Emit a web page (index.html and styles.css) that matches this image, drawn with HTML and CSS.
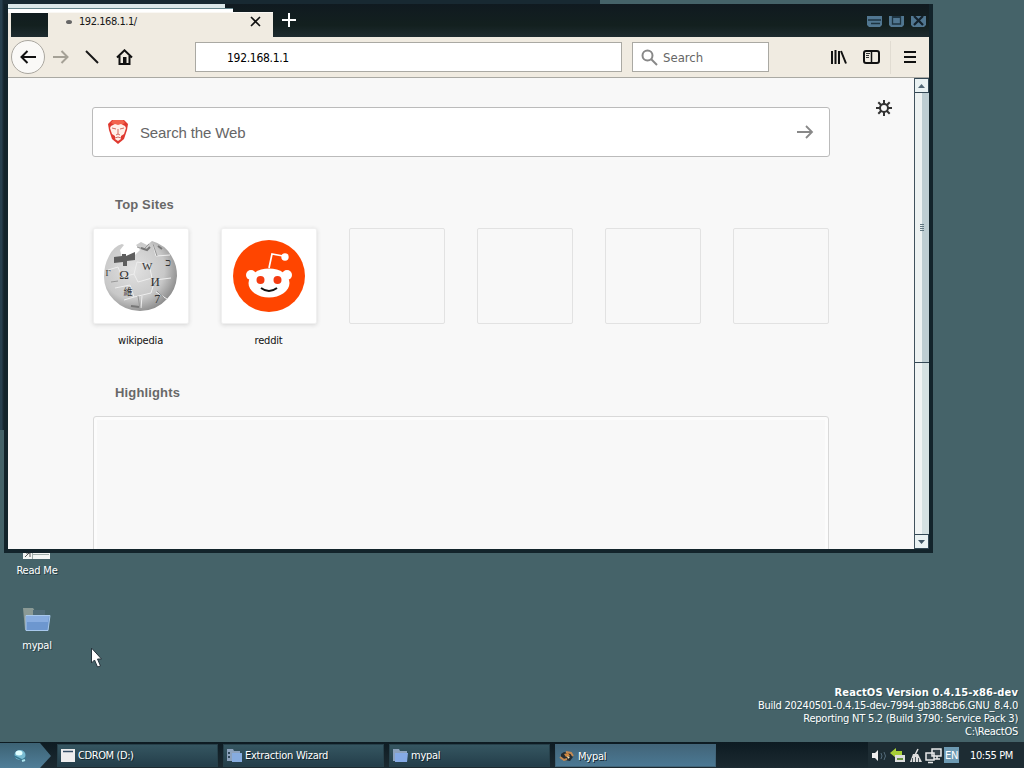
FILE: index.html
```html
<!DOCTYPE html>
<html lang="en">
<head>
<meta charset="utf-8">
<title>ReactOS desktop</title>
<link rel="stylesheet" href="styles.css">
</head>
<body>
<div class="desktop">
  <div class="back-window"></div>

  <div class="shortcut readme">
    <svg width="28" height="10" viewBox="0 0 28 10"><path fill="#f2f6f4" d="M0 0h27v8H0z"/><path fill="#9eaca9" d="M9 0h1v8H9zM10 3h16v1H10z"/><path stroke="#555" fill="none" d="M2 6l4-4M3 2h4v4"/></svg>
    <span>Read Me</span>
  </div>
  <div class="shortcut folder">
    <svg width="28" height="26" viewBox="0 0 28 26"><path fill="#8b9a95" d="M0 1h10l2 3h10v19H2z"/><path fill="#506c78" d="M10 3h12v5H10z"/><path fill="#6d97cf" stroke="#a8c8ec" d="M3 8.500h24L25 23.500H3z"/><path fill="#88ade0" d="M4 9h22l-1 6H4z"/></svg>
    <span>mypal</span>
  </div>

  <div class="window">
    <header class="titlebar">
      <div class="strip strip-top"></div>
      <div class="strip strip-bottom"></div>
      <div class="tab">
        <i class="dot"></i><span>192.168.1.1/</span>
        <svg class="tab-close" width="11" height="11" viewBox="0 0 11 11"><path d="M1 1l9 9M10 1l-9 9" stroke="#111" stroke-width="1.600"/></svg>
      </div>
      <svg class="new-tab" width="14" height="14" viewBox="0 0 14 14"><path d="M7 0v14M0 7h14" stroke="#fff" stroke-width="2"/></svg>
      <svg class="controls" width="60" height="12" viewBox="0 0 60 12">
        <g fill="#517791"><path d="M1 0h15v9l-2 2H3l-2-2z"/><path d="M23 0h15v9l-2 2H25l-2-2z"/><path d="M45 0h15v9l-2 2H47l-2-2z"/></g>
        <path d="M2 4h13M5 7.500h9" stroke="#1d3441" stroke-width="1.500"/><path d="M26.500 0v8h8V0" stroke="#1d3441" stroke-width="1.300" fill="none"/><path d="M27 0h7v2h-7z" fill="#1d3441"/><path d="M48 0l9 9M57 0l-9 9" stroke="#13212b" stroke-width="2.200"/>
      </svg>
    </header>

    <nav class="toolbar">
      <div class="back"><svg width="16" height="14" viewBox="0 0 16 14"><path d="M16 7H2M7.500 1L1.500 7l6 6" stroke="#111" stroke-width="2" fill="none"/></svg></div>
      <svg class="forward" width="16" height="14" viewBox="0 0 16 14"><path d="M0 7h14M8.500 1l6 6-6 6" stroke="#a5a196" stroke-width="2" fill="none"/></svg>
      <svg class="slash" width="14" height="14" viewBox="0 0 14 14"><path d="M1 1l12 12" stroke="#171717" stroke-width="2"/></svg>
      <svg class="home" width="17" height="16" viewBox="0 0 17 16"><path d="M1 8.500L8.500 1.300 16 8.500M3.500 7v8h10V7" stroke="#111" stroke-width="2" fill="none"/><path d="M7 8h3.500v7H7z" fill="#111"/></svg>
      <div class="address">192.168.1.1</div>
      <div class="find"><svg width="17" height="17" viewBox="0 0 17 17"><circle cx="6.500" cy="6.500" r="5" fill="none" stroke="#888" stroke-width="2"/><path d="M10 10l6 6" stroke="#888" stroke-width="2"/></svg><span>Search</span></div>
      <svg class="library" width="17" height="14" viewBox="0 0 17 14"><path d="M2 1v13M5.500 0v14M9 1v13M11 1l5 12.500" stroke="#111" stroke-width="2"/></svg>
      <svg class="sidebar" width="17" height="14" viewBox="0 0 17 14"><rect x="1" y="1" width="15" height="12" rx="2" fill="none" stroke="#111" stroke-width="2"/><path d="M8.500 1v12" stroke="#111" stroke-width="1.500"/><path d="M3 3.500h4M3 5.500h3M3 7.500h3" stroke="#333"/></svg>
      <div class="divider"></div>
      <svg class="menu" width="12" height="12" viewBox="0 0 12 12"><path d="M0 1h12M0 6h12M0 11h12" stroke="#111" stroke-width="2"/></svg>
    </nav>

    <div class="viewport">
      <main class="page">
        <svg class="gear" width="16" height="16" viewBox="0 0 16 16"><g stroke="#333" fill="none" stroke-width="2"><circle cx="8" cy="8" r="4"/><path d="M8 0v4M8 12v4M0 8h4M12 8h4M2.300 2.300l3 3M10.700 10.700l3 3M13.700 2.300l-3 3M5.300 10.700l-3 3"/></g></svg>
        <div class="web-search">
          <svg width="22" height="26" viewBox="0 0 22 26"><path fill="#df392f" d="M5 1h12l4 4-1 6-3 9-6 5-6-5-3-9-1-6z"/><path fill="#f2644d" d="M6 1h10l2 3-4 2H8L4 4z"/><path fill="#fff0e8" d="M4 7l4-2 3 1 3-1 4 2 1 2-2 6-3 2v3l-3 2-3-2v-3l-3-2-2-6z"/><path d="M5 9l4 1M17 9l-4 1M11 10v5l-2 1M11 15l2 1M8 19l3-1 3 1" stroke="#d06c60" fill="none"/></svg>
          <span>Search the Web</span>
          <svg class="go" width="17" height="14" viewBox="0 0 17 14"><path d="M0 7h15M9 1l6 6-6 6" stroke="#888" stroke-width="1.800" fill="none"/></svg>
        </div>
        <h2 class="top-heading">Top Sites</h2>
        <div class="sites">
          <div class="site"><div class="tile filled">
            <svg width="76" height="72" viewBox="0 0 76 72">
              <defs><radialGradient id="globe" cx=".4" cy=".4" r=".66"><stop offset="0" stop-color="#e2e2e2"/><stop offset=".65" stop-color="#c8c8c8"/><stop offset="1" stop-color="#858585"/></radialGradient></defs>
              <path fill="url(#globe)" d="M6 16q5-10 13-12l2 1-4 5 2 7 10 1 4-4 4-4-4-5 5-3 6 3 5-4q14 4 20 16 5 8 5 19-1 14-10 23-11 12-27 12-15 0-26-11Q1 50 1 37 1 25 6 16z"/>
              <path fill="#5e5e5e" d="M11 17l8-1v-2h4v2l9-4v8l-8 1v5h-4v-4l-9 1z"/>
              <g fill="none" stroke="#eee"><path d="M5 30l10-3 4 10 12-3 3-12 12 2 3 14-14 4-4-8M12 48l15-3 4 12 17-4 4-13 16-2M50 4l3 12 14-1M53 52l11 7M21 60l10-3M38 68l1-12"/></g>
              <path fill="none" stroke="#999" d="M34 7l7 2 5-5M50 4l4 12M8 42l7-1M35 56l2 13M54 51l9 9"/>
              <g font-family="Liberation Serif, serif" fill="#333" text-anchor="middle"><text x="21" y="39" font-size="13">Ω</text><text x="44" y="30" font-size="11">W</text><text x="52" y="46" font-size="13">И</text><text x="65" y="26" font-size="11">כ</text><text x="54" y="63" font-size="12">7</text><text x="25" y="55" font-size="9" font-family="Noto Sans CJK SC">維</text><text x="5" y="36" font-size="9">Г</text></g>
              <path d="M38 8l6 2 3-3M55 6l4 3M28 66l8 1" stroke="#777" stroke-width="2" fill="none"/>
            </svg></div><span>wikipedia</span></div>
          <div class="site"><div class="tile filled">
            <svg width="74" height="74" viewBox="0 0 74 74"><circle cx="37" cy="37" r="36" fill="#ff4500"/><path d="M37 29l3-14 11 2" stroke="#fff" stroke-width="1.700" fill="none"/><circle cx="53" cy="18" r="3.700" fill="#fff"/><g fill="#fff"><circle cx="19" cy="36" r="5"/><circle cx="55" cy="36" r="5"/><ellipse cx="37" cy="44" rx="20.500" ry="14.500"/></g><circle cx="28.500" cy="41" r="4" fill="#f43b10"/><circle cx="45.500" cy="41" r="4" fill="#f43b10"/><path d="M29 49q8 6 16 0" stroke="#111" stroke-width="2" fill="none"/></svg>
          </div><span>reddit</span></div>
          <div class="tile"></div><div class="tile"></div><div class="tile"></div><div class="tile"></div>
        </div>
        <h2 class="highlight-heading">Highlights</h2>
        <div class="highlight"></div>
      </main>
      <aside class="scrollbar">
        <div class="scroll-button"><svg width="7" height="4"><path d="M0 4l3.500-4L7 4z" fill="#536876"/></svg></div>
        <div class="thumb"><i class="grip"></i></div>
        <div class="track"></div>
        <div class="scroll-button"><svg width="7" height="4"><path d="M0 0h7L3.500 4z" fill="#405564"/></svg></div>
      </aside>
    </div>
  </div>

  <svg class="cursor" width="14" height="21" viewBox="0 0 14 21"><path d="M1.500 1v15l3-3 3 7 3-1-3-7h4z" fill="#fff" stroke="#26343d"/></svg>

  <div class="version"><b>ReactOS Version 0.4.15-x86-dev</b><span>Build 20240501-0.4.15-dev-7994-gb388cb6.GNU_8.4.0</span><span>Reporting NT 5.2 (Build 3790: Service Pack 3)</span><span>C:\ReactOS</span></div>

  <footer class="taskbar">
    <svg class="start" width="52" height="26" viewBox="0 0 52 26"><defs><linearGradient id="start" x1="0" x2="0" y1="0" y2="1"><stop stop-color="#3c6274"/><stop offset="1" stop-color="#507e98"/></linearGradient></defs><path d="M0 1h40l11 13-11 12H0z" fill="url(#start)"/><ellipse cx="20" cy="13" rx="5.500" ry="5" fill="#78bcd2"/><ellipse cx="19" cy="11" rx="3.500" ry="2.500" fill="#e1ffff"/><path d="M14 14l8 4 4-2" stroke="#397891" stroke-width="1.500" fill="none"/><path d="M22 19l3-1" stroke="#aee4ee" stroke-width="2"/></svg>
    <div class="tasks">
      <div class="task"><svg width="14" height="15"><path d="M0 1h14v13H0z" fill="#eee"/><path d="M2 3.500h10" stroke="#354e65" stroke-width="1.500"/></svg><span class="cd">CDROM (D:)</span></div>
      <div class="task"><svg width="15" height="15"><path d="M0 1h6l1 2h6v10H0z" fill="#8ca2bd"/><path d="M1 4h2v2H1zM1 8h2v2H1z" fill="#30495b"/><path d="M5 5h10v9H5z" fill="#86acdf"/></svg><span>Extraction Wizard</span></div>
      <div class="task"><svg width="15" height="15"><path d="M0 1h6l1 2h7v10H0z" fill="#8ca2bd"/><path d="M2 5h13l-1 9H2z" fill="#85aae6"/></svg><span>mypal</span></div>
      <div class="task active"><svg width="16" height="15"><path d="M2 6l3-2 6 1 3 4-3 4-6-1-3-3z" fill="#252d32"/><path d="M1 9l4 3 3-1M7 4l5 1 2 3" stroke="#c58a52" stroke-width="2" fill="none"/><path d="M5 6l4-1 2 3-4 1z" fill="#d18a42"/><path d="M8 8l3 1-2 2z" fill="#ffe4ae"/></svg><span>Mypal</span></div>
    </div>
    <div class="tray">
      <svg width="88" height="19" viewBox="0 0 88 19">
        <path d="M1 7h3l3-3v11l-3-3H1z" fill="#eee"/><path d="M10 7q2 3 0 6M13 6q3 4 0 8" stroke="#536a79" fill="none"/>
        <path d="M19 7l6-5v3h6v4h-6v3z" fill="#a7cf36"/><path d="M24 9h10v7H24z" fill="#ddd"/><path d="M26 12h6v2h-6z" fill="#65943a"/>
        <path d="M47 3l-3 6" stroke="#ddd" stroke-width="1.500"/><path d="M42 8h5l4 8H39z" fill="#ddd"/><path d="M41.500 12v4M44.500 11v5M47.500 12v4" stroke="#4c585e"/>
        <path d="M61 3h9v7h-9zM55 7h8v7h-8zM57 16.500h5M66 10v3M63 13h6" stroke="#e8e9ea" stroke-width="1.500" fill="#334149"/>
        <path d="M73 1h15v16H73z" fill="#6d9ab3"/><text x="80.500" y="13" text-anchor="middle" font-family="DejaVu Sans Condensed, sans-serif" font-size="11" fill="#fff">EN</text>
      </svg>
      <time>10:55 PM</time>
    </div>
  </footer>
</div>
</body>
</html>
```

FILE: styles.css
```css
* { box-sizing: border-box; }
body { margin: 0; font: 11px "DejaVu Sans Condensed", sans-serif; letter-spacing: -.25px; }
svg { display: block; flex: none; }
.desktop { position: relative; width: 1024px; height: 768px; overflow: hidden; background: #456369; }
.back-window { position: absolute; left: 0; top: 0; width: 600px; height: 430px; background: linear-gradient(90deg, #28404e 0 2px, #182932 3px); }
.window { position: absolute; left: 4px; top: 4px; width: 929px; height: 549px; padding: 0 4px 4px; background: #13242b; }
.titlebar { height: 33px; display: flex; position: relative; padding-left: 40px; background: linear-gradient(#101a20, #13201f 65%, #1e2b2f); border-left: 3px solid #eee9df; }
.strip { position: absolute; left: -3px; }
.strip-top { top: 0; width: 217px; height: 5px; background: #dce8e9; border-bottom: 1px solid #66868d; }
.strip-bottom { top: 4px; width: 225px; height: 5px; background: #fff; border-top: 1px solid #66868d; }
.tab { position: relative; margin: 8px 0 0 -3px; width: 225px; height: 25px; background: #f0ebe1; border-top: 1px solid #faf8f4; display: flex; align-items: center; padding: 0 12px 7px 18px; color: #171717; letter-spacing: -.45px; }
.dot { width: 6px; height: 4px; border-radius: 50%; background: #666; margin-right: 7px; }
.tab-close { margin-left: auto; }
.new-tab { margin: 9px 0 0 9px; }
.controls { margin: 12px 3px 0 auto; }
.toolbar { height: 41px; background: #f0ebe1; border-bottom: 1px solid #aaa9a3; display: flex; align-items: center; padding: 0 13px 0 3px; }
.back { width: 34px; height: 34px; border: 1px solid #aaa7a0; border-radius: 50%; background: #faf9f7; display: grid; place-items: center; flex: none; }
.forward { margin-left: 8px; }
.slash { margin-left: 16px; }
.home { margin-left: 17px; }
.address { width: 427px; height: 30px; margin-left: 62px; background: #fff; border: 1px solid #aaa9a3; padding: 1px 31px 0; line-height: 28px; font-size: 12px; letter-spacing: -.3px; flex: none; }
.find { margin-left: 10px; width: 137px; height: 30px; border: 1px solid #aaa9a3; background: #fff; display: flex; align-items: center; padding-left: 8px; gap: 5px; color: #666; font-size: 13px; letter-spacing: 0; flex: none; }
.library { margin-left: 61px; }
.sidebar { margin-left: 16px; }
.divider { width: 1px; height: 33px; margin: 0 auto 0 10px; background: #e1dcd2; }
.viewport { height: 471px; display: flex; }
.page { width: 906px; height: 471px; padding: 29px 84px 0; background: #f8f8f8; overflow: hidden; position: relative; }
.gear { position: absolute; right: 22px; top: 22px; }
.web-search { width: 738px; height: 50px; border: 1px solid #bbb; border-radius: 3px; background: #fff; display: flex; align-items: center; padding: 0 15px 0 14px; font: 15px "Liberation Sans", sans-serif; letter-spacing: -.13px; color: #666; }
.web-search span { margin: 1px 0 0 11px; }
.go { margin-left: auto; }
h2 { font: bold 13px/18px "Liberation Sans", sans-serif; letter-spacing: .15px; color: #686868; margin: 0 0 0 23px; }
.top-heading { margin-top: 39px; }
.sites { display: flex; gap: 32px; margin: 14px 0 0 1px; height: 126px; }
.site { width: 96px; text-align: center; }
.tile { width: 96px; height: 96px; border: 1px solid #e2e2e2; border-radius: 2px; flex: none; }
.filled { background: #fff; box-shadow: 0 1px 4px #d5d5d5; border-color: #f0f0f0; display: grid; place-items: center; }
.site > span { display: block; margin: 10px 1px 0 0; color: #111; letter-spacing: -.2px; }
.highlight-heading { margin-top: 30px; }
.highlight { width: 736px; height: 150px; border: 1px solid #d9d9d9; box-shadow: inset 0 0 0 3px #fcfcfc; border-radius: 3px; margin: 14px 0 0 1px; }
.scrollbar { width: 15px; height: 471px; display: flex; flex-direction: column; border-left: 1px solid #41535e; background: linear-gradient(90deg, #edf2f2 0 50%, #bdcdd2 50%); }
.scroll-button { height: 15px; border: 1px solid #334855; border-left: 0; background: #eaf2f3; display: grid; place-items: center; }
.thumb { height: 270px; border-bottom: 1px solid #334855; display: grid; place-items: center; }
.grip { width: 4px; height: 7px; background: repeating-linear-gradient(#607680 0 1px, transparent 1px 2px); }
.track { flex: 1; background: linear-gradient(90deg, #f0f4f4 0 50%, #d4e1e2 50%); }
.shortcut { position: absolute; width: 74px; display: flex; flex-direction: column; align-items: center; color: #fff; text-shadow: 1px 1px #263d43; letter-spacing: -.2px; }
.readme { left: 0; top: 551px; }
.readme span { margin-top: 3px; }
.folder { left: 0; top: 607px; }
.folder span { margin-top: 6px; }
.cursor { position: absolute; left: 90px; top: 647px; }
.version { position: absolute; right: 6px; bottom: 30px; color: #fff; display: flex; flex-direction: column; align-items: flex-end; line-height: 13px; text-shadow: 1px 1px #2d4c51; }
.version b { letter-spacing: .13px; }
.taskbar { position: absolute; left: 0; bottom: 0; width: 1024px; height: 26px; background: linear-gradient(#0d1b22, #1c2a31); display: flex; }
.tasks { margin: 2px 0 0 5px; display: flex; gap: 5px; }
.task { width: 161px; height: 23px; padding-left: 3px; background: linear-gradient(#355661, #243e4a); border: 1px solid #26404a; display: flex; align-items: center; gap: 3px; color: #fff; text-shadow: 1px 1px #13242c; }
.cd { letter-spacing: -.4px; }
.active { background: linear-gradient(#426579, #4b7893); border-color: #426579; }
.active span { padding-top: 2px; }
.tray { margin-left: auto; width: 156px; height: 26px; background: #1d2c33; display: flex; align-items: center; padding-left: 3px; color: #fff; letter-spacing: -.4px; }
time { margin-left: 11px; white-space: nowrap; }
```
